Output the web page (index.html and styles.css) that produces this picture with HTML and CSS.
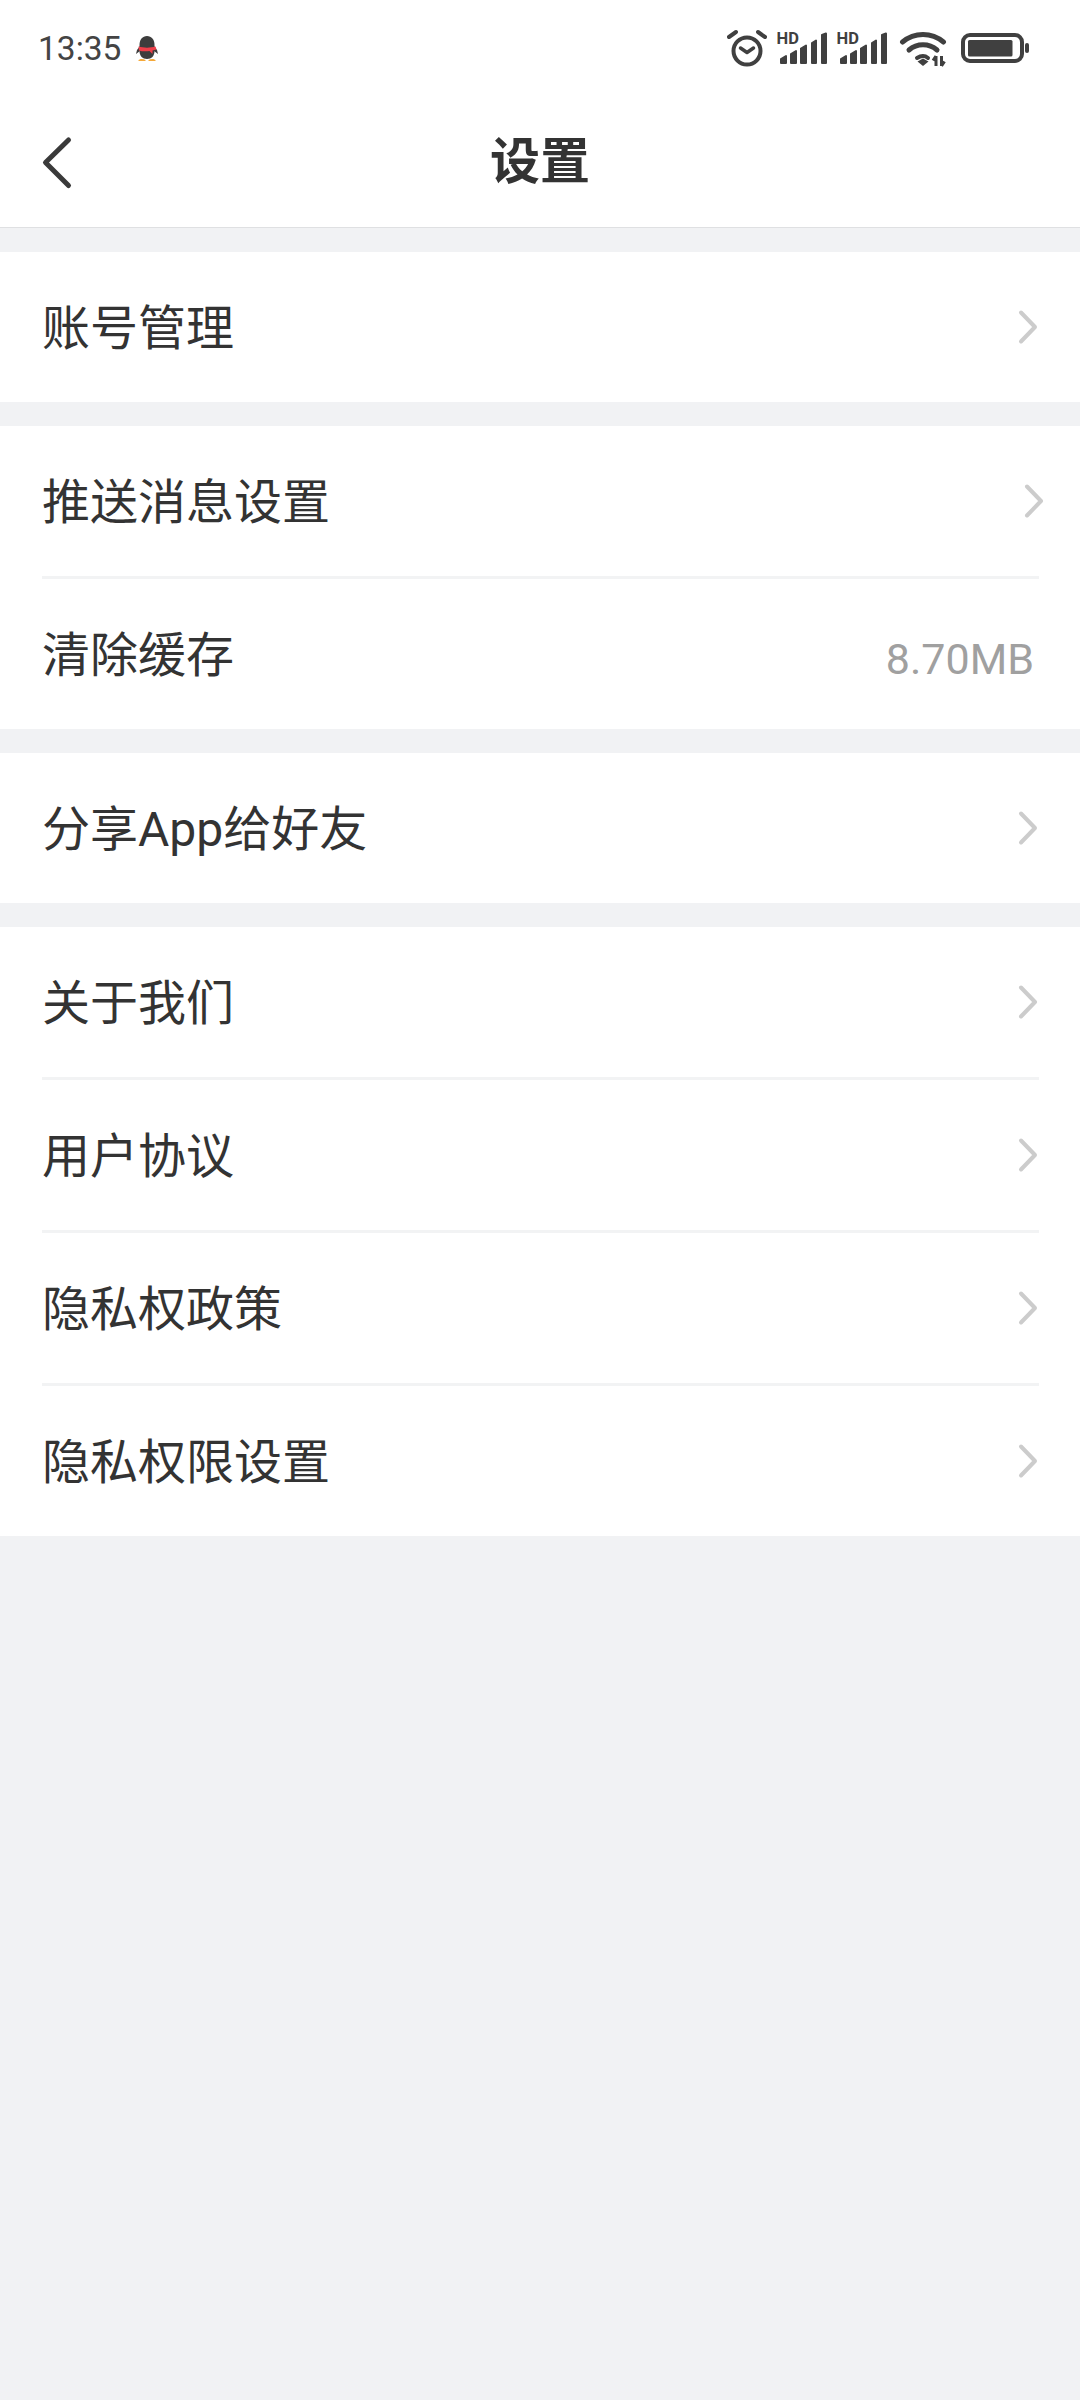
FILE: index.html
```html
<!DOCTYPE html>
<html lang="zh-CN">
  <head>
    <meta charset="UTF-8" />
    <meta name="viewport" content="width=device-width, initial-scale=1.0" />
    <title>设置</title>
    <link rel="stylesheet" href="styles.css">
  </head>
  <body>
    <header class="header">
      <div class="status">
        <div class="status__left">
          <span class="status__time">13:35</span>
          <svg class="status__penguin" width="24" height="26" viewBox="0 0 24 26">
            <path d="M5 16l-4 3 1-4 3-4zM19 16l4 3-1-4-3-4z" fill="#3d3d3d" />
            <path d="M12 1c4.500 0 7.500 3.500 7.500 9v6c0 5-3 8-7.500 8s-7.500-3-7.500-8v-6c0-5.500 3-9 7.500-9z" fill="#3d3d3d" />
            <path d="M3.500 11.500c5 1.500 12 1.500 17 0l1 3-4 1v3.500l-3-3c-3.500.5-7.500.5-10.500-.5z" fill="#ee3f4a" />
            <path d="M3.500 25c1.500-1.500 5-1.500 7 0v1h-7zM13.500 25c2-1.500 5.500-1.500 7 0v1h-7z" fill="#f5a93a" />
          </svg>
        </div>
        <div class="status__right">
          <!-- alarm -->
          <svg width="40" height="40" viewBox="727 28 40 40" fill="none" stroke="#404040" stroke-linecap="round" stroke-linejoin="round">
            <circle cx="747" cy="51" r="13.500" stroke-width="4" />
            <path d="M729 37l7-5M765 37l-7-5" stroke-width="4" />
            <path d="M740.500 48l6.500 4.500 6.500-4.500" stroke-width="3.500" />
          </svg>
          <!-- signal -->
          <svg width="50" height="40" viewBox="777 28 50 40">
            <text class="status__hd" x="776.500" y="43.500">HD</text>
            <path d="M781 59l5-3v7h-5zM791 54l5-3v12h-5zM801 48.500l5-3V63h-5zM812 43l4-2.500V63h-4zM822 35l4-1.500V63h-4z" fill="#404040" stroke="#404040" stroke-width="2" stroke-linejoin="round" />
          </svg>
          <svg width="50" height="40" viewBox="777 28 50 40">
            <text class="status__hd" x="776.500" y="43.500">HD</text>
            <path d="M781 59l5-3v7h-5zM791 54l5-3v12h-5zM801 48.500l5-3V63h-5zM812 43l4-2.500V63h-4zM822 35l4-1.500V63h-4z" fill="#404040" stroke="#404040" stroke-width="2" stroke-linejoin="round" />
          </svg>
          <!-- wifi -->
          <svg width="50" height="40" viewBox="897 28 50 40" fill="none" stroke="#404040" stroke-linecap="round">
            <path d="M902.500 42c12-10 29-10 41 0" stroke-width="5" />
            <path d="M909 50c8-7 20-7 28 0" stroke-width="5" />
            <path d="M917 58c4-2.500 8-2.500 11 0" stroke-width="4" />
            <path d="M917.500 61.500l5.500-3 5.500 3-5.500 4.500z" fill="#404040" stroke="none" />
            <path d="M936 56v10M933 60.500l3-4.500M941.500 56v10M944.500 61.500l-3 4.500" stroke-width="3" stroke-linecap="butt" />
          </svg>
          <!-- battery -->
          <svg width="72" height="40" viewBox="957 28 72 40">
            <rect x="963" y="35" width="59" height="26" rx="7" fill="none" stroke="#404040" stroke-width="4" />
            <rect x="968" y="40" width="44.500" height="16.500" rx="1.500" fill="#404040" />
            <rect x="1025" y="43" width="4" height="10" rx="2" fill="#404040" />
          </svg>
        </div>
      </div>
      <nav class="nav">
        <svg class="nav__back" width="40" height="60" viewBox="0 0 40 60" fill="none">
          <path d="M28.500 8L5.500 30.500l23 23" stroke="#3a3a3a" stroke-width="5" stroke-linecap="round" stroke-linejoin="round" />
        </svg>
        <h1 class="nav__title">设置</h1>
      </nav>
    </header>

    <main>
      <section class="group">
        <div class="row">
          <span class="row__label">账号管理</span>
          <svg class="row__arrow" width="20" height="36" viewBox="0 0 20 36"><path d="M3 3.500L17 18 3 32.500" /></svg>
        </div>
      </section>

      <section class="group">
        <div class="row row--wide">
          <span class="row__label">推送消息设置</span>
          <svg class="row__arrow" width="20" height="36" viewBox="0 0 20 36"><path d="M3 3.500L17 18 3 32.500" /></svg>
        </div>
        <div class="group__line"></div>
        <div class="row row--value">
          <span class="row__label">清除缓存</span>
          <span class="row__value">8.70MB</span>
        </div>
      </section>

      <section class="group">
        <div class="row">
          <span class="row__label">分享App给好友</span>
          <svg class="row__arrow" width="20" height="36" viewBox="0 0 20 36"><path d="M3 3.500L17 18 3 32.500" /></svg>
        </div>
      </section>

      <section class="group">
        <div class="row">
          <span class="row__label">关于我们</span>
          <svg class="row__arrow" width="20" height="36" viewBox="0 0 20 36"><path d="M3 3.500L17 18 3 32.500" /></svg>
        </div>
        <div class="group__line"></div>
        <div class="row">
          <span class="row__label">用户协议</span>
          <svg class="row__arrow" width="20" height="36" viewBox="0 0 20 36"><path d="M3 3.500L17 18 3 32.500" /></svg>
        </div>
        <div class="group__line"></div>
        <div class="row">
          <span class="row__label">隐私权政策</span>
          <svg class="row__arrow" width="20" height="36" viewBox="0 0 20 36"><path d="M3 3.500L17 18 3 32.500" /></svg>
        </div>
        <div class="group__line"></div>
        <div class="row">
          <span class="row__label">隐私权限设置</span>
          <svg class="row__arrow" width="20" height="36" viewBox="0 0 20 36"><path d="M3 3.500L17 18 3 32.500" /></svg>
        </div>
      </section>
    </main>
  </body>
</html>
```

FILE: styles.css
```css
* {
  box-sizing: border-box;
}

html,
body {
  height: 100%;
}

body {
  margin: 0;
  background: #f1f2f4;
  color: #333;
  font-family: Roboto, "Noto Sans CJK SC", sans-serif;
  overflow: hidden;
}

.header {
  background: #fff;
  border-bottom: 1px solid #dfe0e2;
}

.status {
  display: flex;
  justify-content: space-between;
  height: 96px;
  padding: 28px 51px 0 38px;
}

.status__left {
  display: flex;
  align-items: center;
  gap: 14px;
  height: 40px;
}

.status__time {
  font-size: 33.5px;
  color: #444;
}

.status__right {
  display: flex;
  gap: 10px;
}

.status__hd {
  font-size: 16.5px;
  font-weight: 700;
  fill: #404040;
}

.nav {
  display: grid;
  grid-template-columns: 1fr auto 1fr;
  align-items: center;
  height: 131px;
  padding: 0 40px;
}

.nav__title {
  margin: 0;
  font-size: 50px;
  font-weight: 700;
  line-height: 60px;
  color: #333;
}

.group {
  margin-top: 24px;
  background: #fff;
}

.group__line {
  height: 3px;
  margin: 0 41px 0 42px;
  background: #f2f3f4;
}

.row {
  display: flex;
  align-items: center;
  justify-content: space-between;
  height: 150px;
  padding: 0 42px;
}

.row--wide {
  padding-right: 36px;
}

.row--value {
  padding-right: 46px;
}

.row__label {
  padding-top: 3px;
  font-size: 48px;
  line-height: 60px;
  color: #333;
}

.row__value {
  padding-top: 10px;
  font-size: 43px;
  color: #a0a0a0;
}

.row__arrow path {
  fill: none;
  stroke: #cccccc;
  stroke-width: 4px;
  stroke-linecap: round;
  stroke-linejoin: round;
}
```
